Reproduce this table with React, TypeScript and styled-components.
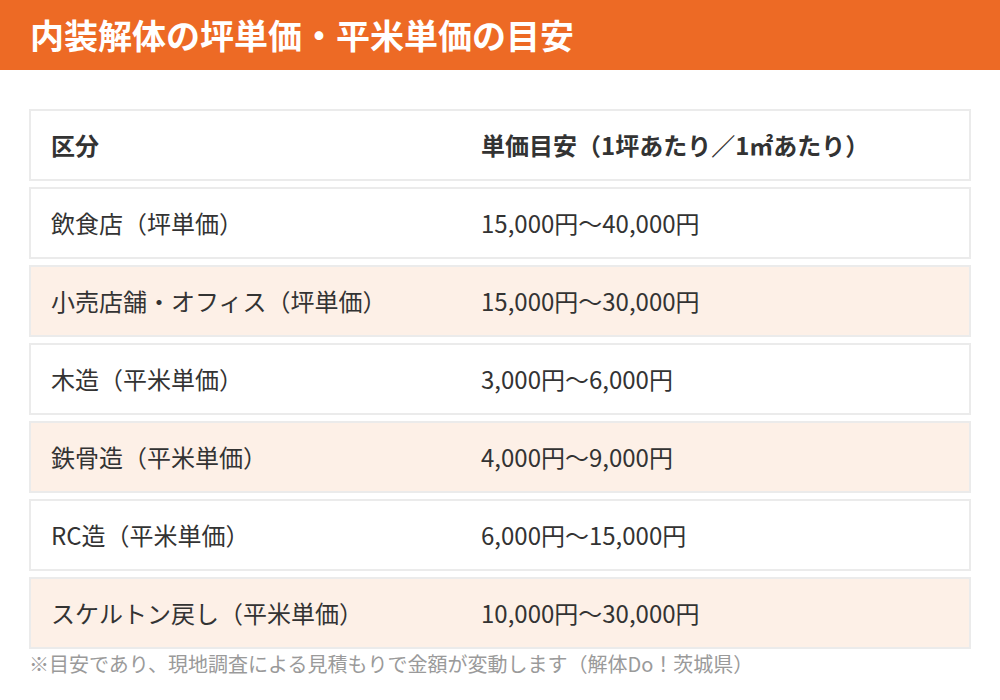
import React from "react";
import styled, { createGlobalStyle } from "styled-components";

const GlobalStyle = createGlobalStyle`
  html, body { margin: 0; padding: 0; background: #ffffff; }
  body { font-family: "Noto Sans CJK JP", "Noto Sans", sans-serif; color: #333333; }
`;

const Page = styled.div`
  width: 1000px;
  display: flex;
  flex-direction: column;
`;

const TitleBar = styled.header`
  height: 70px;
  background: #ed6a25;
  display: flex;
  align-items: center;
  padding: 0 30px;
  box-sizing: border-box;
`;

const Title = styled.h1`
  margin: 0;
  color: #ffffff;
  font-size: 34px;
  font-weight: 700;
  line-height: 1;
  letter-spacing: 0;
`;

const Content = styled.section`
  padding: 39px 29px 0 29px;
  display: flex;
  flex-direction: column;
`;

const Table = styled.div`
  display: flex;
  flex-direction: column;
  gap: 6px;
`;

const Row = styled.div<{ $tinted?: boolean }>`
  display: grid;
  grid-template-columns: 430px 1fr;
  height: 72px;
  box-sizing: border-box;
  border: 2px solid #ebebeb;
  background: ${(p) => (p.$tinted ? "#fdf0e7" : "#ffffff")};
  align-items: center;
`;

const Cell = styled.div<{ $head?: boolean }>`
  padding: 0 20px;
  font-size: 24px;
  font-weight: ${(p) => (p.$head ? 700 : 400)};
  color: #333333;
  white-space: nowrap;
  line-height: 1;
`;

const Note = styled.p`
  margin: 2px 0 0 0;
  font-size: 20px;
  color: #9a9a9a;
  line-height: 1.3;
  white-space: nowrap;
`;

const rows = [
  ["飲食店（坪単価）", "15,000円〜40,000円"],
  ["小売店舗・オフィス（坪単価）", "15,000円〜30,000円"],
  ["木造（平米単価）", "3,000円〜6,000円"],
  ["鉄骨造（平米単価）", "4,000円〜9,000円"],
  ["RC造（平米単価）", "6,000円〜15,000円"],
  ["スケルトン戻し（平米単価）", "10,000円〜30,000円"],
];

export default function App() {
  return (
    <>
      <GlobalStyle />
      <Page>
        <TitleBar>
          <Title>内装解体の坪単価・平米単価の目安</Title>
        </TitleBar>
        <Content>
          <Table>
            <Row>
              <Cell $head>区分</Cell>
              <Cell $head>単価目安（1坪あたり／1㎡あたり）</Cell>
            </Row>
            {rows.map(([a, b], i) => (
              <Row key={a} $tinted={i % 2 === 1}>
                <Cell>{a}</Cell>
                <Cell>{b}</Cell>
              </Row>
            ))}
          </Table>
          <Note>※目安であり、現地調査による見積もりで金額が変動します（解体Do！茨城県）</Note>
        </Content>
      </Page>
    </>
  );
}
